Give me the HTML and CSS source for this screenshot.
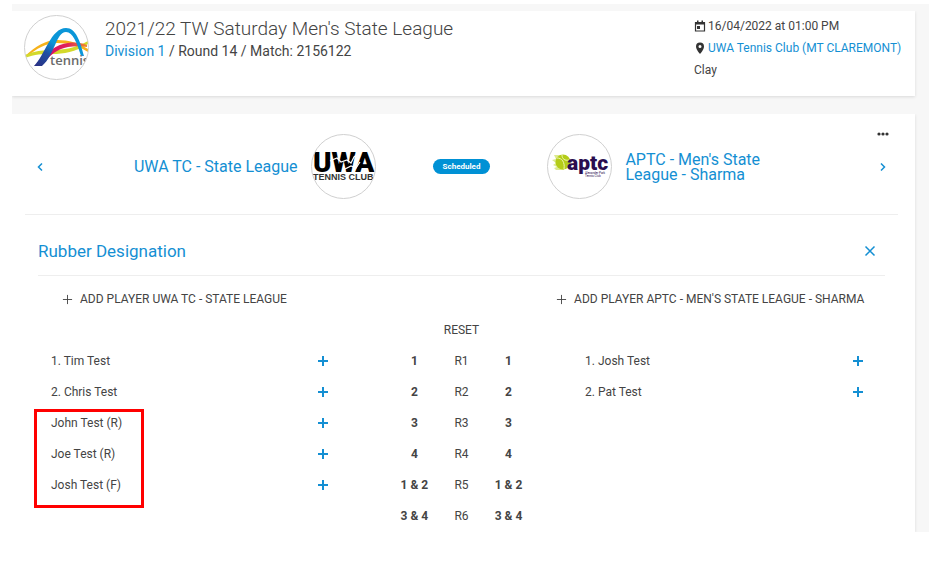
FILE: index.html
```html
<!DOCTYPE html>
<html lang="en">
<head>
    <meta charset="UTF-8">
    <meta name="viewport" content="width=device-width, initial-scale=1.0">
    <title>2021/22 TW Saturday Men's State League</title>
    <link rel="stylesheet" href="styles.css">
</head>
<body>
    <svg width="0" height="0" class="symbols" aria-hidden="true">
        <symbol id="plus" viewBox="0 0 12 12">
            <path d="M6 1v10M1 6h10" fill="none" stroke="currentColor"/>
        </symbol>
    </svg>

    <div class="page">
        <header class="card match-header">
            <svg class="logo" viewBox="0 0 65 65" role="img" aria-label="Tennis West">
                <defs>
                    <clipPath id="circle"><circle cx="32.5" cy="32.5" r="32"/></clipPath>
                    <linearGradient id="arc" x1="0" y1="1" x2="1" y2="0">
                        <stop offset="0" stop-color="#2b2f83"/>
                        <stop offset="0.3" stop-color="#1f4fa3"/>
                        <stop offset="0.5" stop-color="#0b96d8"/>
                    </linearGradient>
                    <linearGradient id="swoosh">
                        <stop offset="0" stop-color="#d6006c"/>
                        <stop offset="0.6" stop-color="#e0205a"/>
                        <stop offset="1" stop-color="#f08a2c"/>
                    </linearGradient>
                </defs>
                <g clip-path="url(#circle)">
                    <path d="M1 41C12 31 22 25 33 25c12 0 22 3 31 9v3c-9-6-19-9-31-9-10 0-20 5-32 15z" fill="#f6b21b"/>
                    <path d="M1 40C10 36 19 35 28 35c12 0 23-2 36-9v3c-13 8-24 10-36 10-10 0-17 0-27 4z" fill="#d3d92b"/>
                    <path d="M13 50C22 37 33 29 44 28c8-1 14 0 19 2v2c-6-1-13-1-19 0-11 2-18 8-26 18z" fill="url(#swoosh)"/>
                    <path d="M10 51C21 40 27 13 42 13c10 0 14 13 18 28h-3C53 28 49 17 42 17c-10 0-11 23-24 34z" fill="url(#arc)"/>
                    <text class="logo-tennis" x="26" y="50">tennis</text>
                </g>
                <circle cx="32.5" cy="32.5" r="32" fill="none" stroke="#d0d0d0"/>
            </svg>
            <div class="match-title">
                <h1>2021/22 TW Saturday Men's State League</h1>
                <p><a href="#">Division 1</a> / Round 14 / Match: 2156122</p>
            </div>
            <ul class="match-info">
                <li>
                    <svg class="info-icon" viewBox="0 0 12 12" aria-hidden="true">
                        <path d="M1.500 2.500h9v8.500h-9z" fill="none" stroke="#333" stroke-width="1.200"/>
                        <path d="M1 2h10v2.500H1zM3 .5h1.500V2H3zM7.500.5H9V2H7.500zM3 6h3v3H3z" fill="#333"/>
                    </svg>
                    <span>16/04/2022 at 01:00 PM</span>
                </li>
                <li>
                    <svg class="info-icon" viewBox="0 0 12 12" aria-hidden="true">
                        <path d="M6 .5a4 4 0 0 0-4 4C2 7.500 6 12 6 12s4-4.500 4-7.500a4 4 0 0 0-4-4zm0 5.500a1.500 1.500 0 1 1 0-3 1.500 1.500 0 0 1 0 3z" fill="#333"/>
                    </svg>
                    <a href="#">UWA Tennis Club (MT CLAREMONT)</a>
                </li>
                <li>Clay</li>
            </ul>
        </header>

        <main class="card match">
            <button class="more" type="button" aria-label="More options">
                <svg viewBox="0 0 12 4" aria-hidden="true">
                    <circle cx="2" cy="2" r="1.600"/><circle cx="6" cy="2" r="1.600"/><circle cx="10" cy="2" r="1.600"/>
                </svg>
            </button>

            <div class="teams">
                <button class="nav" type="button" aria-label="Previous match">
                    <svg viewBox="0 0 6 8" aria-hidden="true"><path d="M5 .5L1.500 4 5 7.500"/></svg>
                </button>
                <div class="team home">
                    <a href="#">UWA TC - State League</a>
                    <svg class="logo" viewBox="0 0 65 65" role="img" aria-label="UWA Tennis Club">
                        <g clip-path="url(#circle)">
                            <text class="logo-uwa" x="2" y="38">UWA</text>
                            <path d="M19 27l7-3 4 4 6-2 4 3 3-6 4-3M34 35l6-3 5 2 4-6" fill="none" stroke="#fff" stroke-width="1.200"/>
                            <text class="logo-club" x="2" y="46">TENNIS CLUB</text>
                        </g>
                        <circle cx="32.5" cy="32.5" r="32" fill="none" stroke="#d0d0d0"/>
                    </svg>
                </div>
                <span class="status">Scheduled</span>
                <div class="team away">
                    <svg class="logo" viewBox="0 0 65 65" role="img" aria-label="Alexander Park Tennis Club">
                        <path d="M7 21h10v15H9l-2-2 3-1-4-2 3-2-4-3 4-1z" fill="#dcea8e"/>
                        <circle cx="16" cy="28" r="7.500" fill="#b4cc18"/>
                        <path d="M10 24c5 0 8 4 7 11M15 21c0 4 3 6 7 5" fill="none" stroke="#eef5b0"/>
                        <text class="logo-aptc" x="20" y="36">aptc</text>
                        <text class="logo-aptc-sub" x="38" y="40">Alexander Park</text>
                        <text class="logo-aptc-sub" x="38" y="43">Tennis Club</text>
                        <circle cx="32.5" cy="32.5" r="32" fill="none" stroke="#d0d0d0"/>
                    </svg>
                    <a href="#">APTC - Men's State League - Sharma</a>
                </div>
                <button class="nav" type="button" aria-label="Next match">
                    <svg viewBox="0 0 6 8" aria-hidden="true"><path d="M1 .5L4.500 4 1 7.500"/></svg>
                </button>
            </div>

            <section class="designation">
                <div class="designation-head">
                    <h2>Rubber Designation</h2>
                    <button class="close" type="button" aria-label="Close">
                        <svg viewBox="0 0 12 12" aria-hidden="true"><path d="M1.500 1.500l9 9M10.500 1.500l-9 9"/></svg>
                    </button>
                </div>

                <div class="columns">
                    <div class="side side-home">
                        <button class="add-player" type="button"><svg><use href="#plus"/></svg>ADD PLAYER UWA TC - STATE LEAGUE</button>
                        <ul class="players">
                            <li>1. Tim Test <button type="button" aria-label="Add Tim Test"><svg><use href="#plus"/></svg></button></li>
                            <li>2. Chris Test <button type="button" aria-label="Add Chris Test"><svg><use href="#plus"/></svg></button></li>
                        </ul>
                        <ul class="players highlighted">
                            <li>John Test (R) <button type="button" aria-label="Add John Test"><svg><use href="#plus"/></svg></button></li>
                            <li>Joe Test (R) <button type="button" aria-label="Add Joe Test"><svg><use href="#plus"/></svg></button></li>
                            <li>Josh Test (F) <button type="button" aria-label="Add Josh Test"><svg><use href="#plus"/></svg></button></li>
                        </ul>
                    </div>

                    <div class="rubbers">
                        <button class="reset" type="button">RESET</button>
                        <table>
                            <tr><td>1</td><th scope="row">R1</th><td>1</td></tr>
                            <tr><td>2</td><th scope="row">R2</th><td>2</td></tr>
                            <tr><td>3</td><th scope="row">R3</th><td>3</td></tr>
                            <tr><td>4</td><th scope="row">R4</th><td>4</td></tr>
                            <tr><td>1 &amp; 2</td><th scope="row">R5</th><td>1 &amp; 2</td></tr>
                            <tr><td>3 &amp; 4</td><th scope="row">R6</th><td>3 &amp; 4</td></tr>
                        </table>
                    </div>

                    <div class="side side-away">
                        <button class="add-player" type="button"><svg><use href="#plus"/></svg>ADD PLAYER APTC - MEN'S STATE LEAGUE - SHARMA</button>
                        <ul class="players">
                            <li>1. Josh Test <button type="button" aria-label="Add Josh Test"><svg><use href="#plus"/></svg></button></li>
                            <li>2. Pat Test <button type="button" aria-label="Add Pat Test"><svg><use href="#plus"/></svg></button></li>
                        </ul>
                    </div>
                </div>
            </section>
        </main>
    </div>
</body>
</html>
```

FILE: styles.css
```css
*,
*::after {
    box-sizing: border-box;
}

body {
    margin: 4px 8px 0 12px;
    font-family: Roboto, "Liberation Sans", sans-serif;
    font-size: 12px;
    line-height: 16px;
    color: #444;
    background: #fff;
}

h1,
h2,
p,
ul {
    margin: 0;
    padding: 0;
    font-weight: 400;
}

ul {
    list-style: none;
}

a {
    color: #148fd3;
    text-decoration: none;
}

a:hover {
    text-decoration: underline;
}

button {
    padding: 0;
    border: 0;
    background: none;
    font: inherit;
    color: inherit;
    cursor: pointer;
}

svg {
    display: block;
    flex: none;
}

.symbols {
    position: absolute;
}

.page {
    padding: 7px 14px 0 0;
    background: #f7f7f7;
}

.card {
    background: #fff;
    box-shadow: 0 1px 3px rgba(0, 0, 0, 0.12);
    clip-path: inset(0 -3px -4px 0);
}

.logo {
    width: 65px;
    height: 65px;
}

/* match header */
.match-header {
    display: flex;
    gap: 16px;
    min-height: 85px;
    margin-bottom: 18px;
    padding: 4px 16px 0 12px;
}

.match-title {
    flex: 1;
    padding-top: 2px;
}

.match-title h1 {
    font-size: 19px;
    font-weight: 300;
    line-height: 24px;
}

.match-title p {
    font-size: 14px;
    line-height: 20px;
}

.match-info {
    width: 205px;
}

.match-info li {
    display: flex;
    align-items: center;
    gap: 2px;
    height: 22px;
    white-space: nowrap;
}

.info-icon {
    width: 12px;
    height: 12px;
}

/* teams */
.match {
    padding: 14px 17px 1px 13px;
    clip-path: inset(0 -3px 0 0);
}

.more {
    display: block;
    margin: 0 9px 0 auto;
    padding: 4px 0;
}

.more svg {
    width: 12px;
    height: 4px;
    fill: #333;
}

.teams {
    display: flex;
    align-items: center;
    padding: 0 12px 15px;
    margin-top: -6px;
    border-bottom: 1px solid #eee;
}

.nav svg {
    width: 6px;
    height: 8px;
    fill: none;
    stroke: #148fd3;
    stroke-width: 1.5px;
}

.team {
    flex: 1;
    display: flex;
    align-items: center;
    gap: 13px;
    font-size: 16px;
    line-height: 15px;
}

.home {
    justify-content: flex-end;
}

.away a {
    max-width: 144px;
}

.status {
    margin: 0 57px;
    padding: 0 10px;
    border-radius: 8px;
    background: #0091d5;
    color: #fff;
    font-size: 8px;
    font-weight: 700;
    line-height: 15px;
}

/* rubber designation */
.designation {
    margin: 0 13px;
}

.designation-head {
    display: flex;
    align-items: center;
    justify-content: space-between;
    height: 61px;
    padding: 12px 9px 0 0;
    border-bottom: 1px solid #eee;
}

.designation-head h2 {
    color: #148fd3;
    font-size: 17px;
    line-height: 24px;
}

.close svg {
    width: 12px;
    height: 12px;
    stroke: #148fd3;
    stroke-width: 1.5px;
}

.columns {
    display: grid;
    grid-template-columns: 5fr 2fr 5fr;
}

.add-player {
    display: flex;
    align-items: center;
    gap: 7px;
    height: 46px;
    margin: 0 0 23px 24px;
    white-space: nowrap;
}

.add-player svg {
    width: 11px;
    height: 11px;
}

.side-home .players {
    margin: 0 62px 0 13px;
}

.side-away .players {
    margin: 0 21px 0 53px;
}

.players li {
    display: flex;
    align-items: center;
    justify-content: space-between;
    height: 31px;
}

.players svg {
    width: 12px;
    height: 12px;
    color: #148fd3;
    stroke-width: 2px;
}

.highlighted {
    position: relative;
}

.highlighted::after {
    content: "";
    position: absolute;
    top: 2px;
    left: -17px;
    width: 110px;
    height: 99px;
    border: 3px solid #f00;
    pointer-events: none;
}

.reset {
    display: block;
    margin: 46px auto 7px;
}

.rubbers table {
    width: 100%;
    table-layout: fixed;
    border-collapse: collapse;
    text-align: center;
}

.rubbers td,
.rubbers th {
    height: 31px;
    padding: 0;
    white-space: nowrap;
}

.rubbers td {
    font-weight: 700;
}

.rubbers th {
    font-weight: 400;
}

/* lettering inside the club logos */
.logo-tennis {
    font: 600 13px "Open Sans", sans-serif;
    fill: #6b6b6b;
}

.logo-uwa {
    font: 900 28px Roboto, sans-serif;
    fill: #000;
}

.logo-club {
    font: 700 9px "Liberation Sans", sans-serif;
    fill: #333;
}

.logo-aptc {
    font: 900 21px Roboto, sans-serif;
    fill: #2a0d4f;
}

.logo-aptc-sub {
    font: 3px Roboto, sans-serif;
    fill: #2a0d4f;
}

@media (max-width: 768px) {
    .match-header {
        flex-wrap: wrap;
        padding-bottom: 12px;
    }

    .status {
        margin: 0 12px;
    }

    .add-player {
        white-space: normal;
    }
}
```
